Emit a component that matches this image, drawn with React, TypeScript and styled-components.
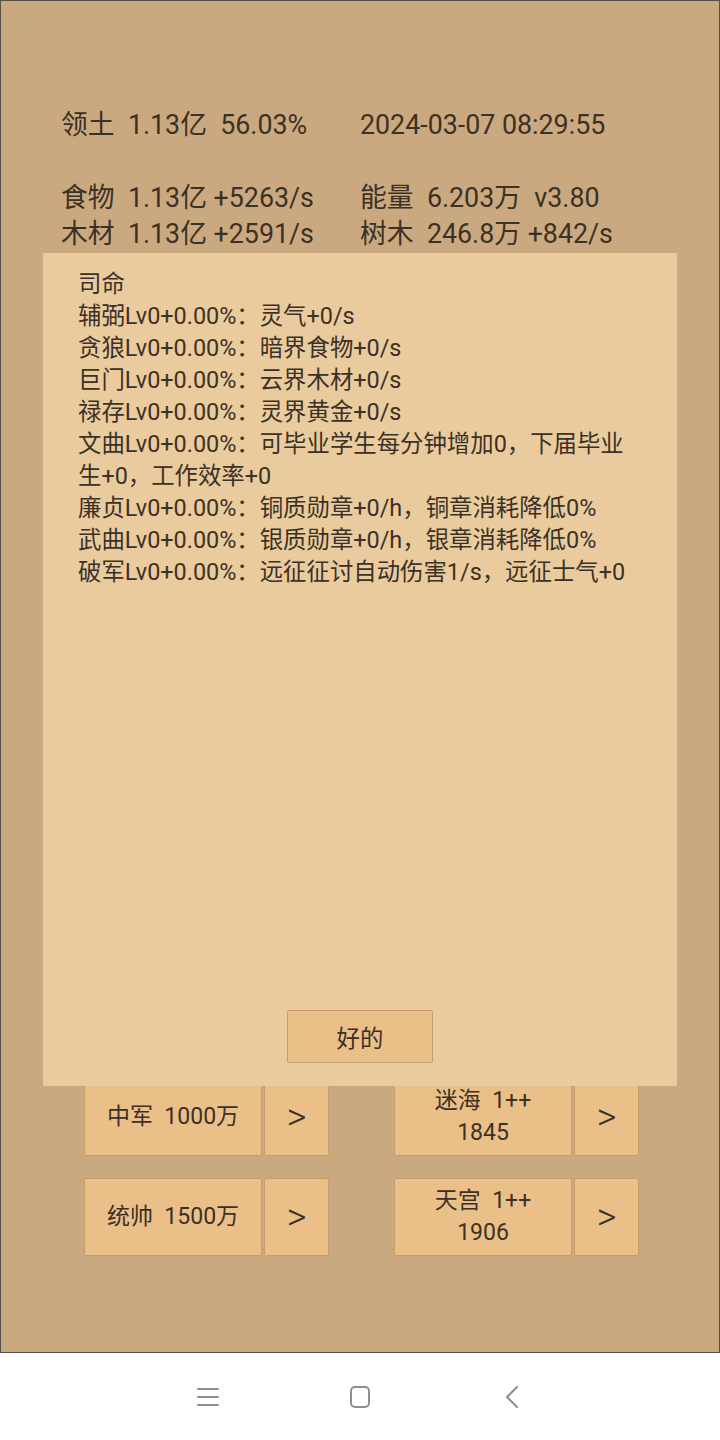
import styled, { createGlobalStyle } from 'styled-components';

const GlobalStyle = createGlobalStyle`
  html, body {
    margin: 0;
    padding: 0;
    background: #ffffff;
  }
  body {
    font-family: Roboto, "Noto Sans CJK SC", sans-serif;
    color: #3a3026;
  }
  * { box-sizing: border-box; }
`;

const Page = styled.div`
  width: 720px;
  height: 1440px;
  display: flex;
  flex-direction: column;
`;

const Screen = styled.div`
  position: relative;
  height: 1353px;
  background: #caa981;
  border: 1px solid #54524f;
  display: flex;
  flex-direction: column;
  padding: 106px 0 96px 0;
`;

const StatGrid = styled.div`
  display: grid;
  grid-template-columns: 299px 1fr;
  padding-left: 60px;
  font-size: 26.8px;
  line-height: 36px;
  color: #3b3125;
  white-space: pre;
`;

const Spacer = styled.div`
  grid-column: 1 / span 2;
  height: 37px;
`;

const ButtonGrid = styled.div`
  margin-top: auto;
  display: grid;
  grid-template-columns: 245px 245px;
  column-gap: 65px;
  row-gap: 22px;
  padding-left: 83px;
`;

const ButtonPair = styled.div`
  display: flex;
  gap: 2px;
  height: 78px;
`;

const GameButton = styled.div<{ $width: number; $big?: boolean }>`
  width: ${({ $width }) => $width}px;
  height: 100%;
  background: #ebc088;
  border: 1px solid #c79c68;
  border-radius: 2px;
  display: flex;
  flex-direction: column;
  align-items: center;
  justify-content: center;
  text-align: center;
  font-size: ${({ $big }) => ($big ? '38px' : '23px')};
  font-weight: ${({ $big }) => ($big ? 300 : 400)};
  line-height: 32px;
  color: #3b3127;
  white-space: pre;
`;

const Dialog = styled.div`
  position: absolute;
  left: 42px;
  top: 252px;
  width: 634px;
  height: 833px;
  background: #eacb9d;
  display: flex;
  flex-direction: column;
  padding: 15px 35px 23px 35px;
`;

const DialogText = styled.div`
  font-size: 23.4px;
  line-height: 32px;
  color: #3b3127;
`;

const OkButton = styled.div`
  margin: auto auto 0 auto;
  width: 146px;
  height: 53px;
  background: #ebc088;
  border: 1px solid #c79c68;
  border-radius: 2px;
  display: flex;
  align-items: center;
  justify-content: center;
  font-size: 23.4px;
  color: #3b3127;
`;

const NavBar = styled.div`
  flex: 1;
  background: #ffffff;
  display: flex;
  align-items: center;
  justify-content: center;
  gap: 128px;
`;

const NavIcon = styled.svg`
  width: 24px;
  height: 24px;
  stroke: #8d8d8d;
  fill: none;
  stroke-width: 2;
  stroke-linecap: round;
  stroke-linejoin: round;
`;

const stats = [
  ['领土  1.13亿  56.03%', '2024-03-07 08:29:55'],
  null,
  ['食物  1.13亿 +5263/s', '能量  6.203万  v3.80'],
  ['木材  1.13亿 +2591/s', '树木  246.8万 +842/s'],
];

const lines = [
  '司命',
  '辅弼Lv0+0.00%：灵气+0/s',
  '贪狼Lv0+0.00%：暗界食物+0/s',
  '巨门Lv0+0.00%：云界木材+0/s',
  '禄存Lv0+0.00%：灵界黄金+0/s',
  '文曲Lv0+0.00%：可毕业学生每分钟增加0，下届毕业生+0，工作效率+0',
  '廉贞Lv0+0.00%：铜质勋章+0/h，铜章消耗降低0%',
  '武曲Lv0+0.00%：银质勋章+0/h，银章消耗降低0%',
  '破军Lv0+0.00%：远征征讨自动伤害1/s，远征士气+0',
];

const buttons = ['中军  1000万', '迷海  1++\n1845', '统帅  1500万', '天宫  1++\n1906'];

export default function App() {
  return (
    <Page>
      <GlobalStyle />
      <Screen>
        <StatGrid>
          {stats.map((row, i) =>
            row ? (
              <>
                <span key={`a${i}`}>{row[0]}</span>
                <span key={`b${i}`}>{row[1]}</span>
              </>
            ) : (
              <Spacer key={`s${i}`} />
            )
          )}
        </StatGrid>
        <ButtonGrid>
          {buttons.map((label) => (
            <ButtonPair key={label}>
              <GameButton $width={178}>{label}</GameButton>
              <GameButton $width={65} $big>
                {'>'}
              </GameButton>
            </ButtonPair>
          ))}
        </ButtonGrid>
        <Dialog>
          {lines.map((line) => (
            <DialogText key={line}>{line}</DialogText>
          ))}
          <OkButton>好的</OkButton>
        </Dialog>
      </Screen>
      <NavBar>
        <NavIcon viewBox="0 0 24 24">
          <path d="M2 4h20M2 12h20M2 20h20" />
        </NavIcon>
        <NavIcon viewBox="0 0 24 24">
          <rect x="3" y="2" width="18" height="20" rx="4" />
        </NavIcon>
        <NavIcon viewBox="0 0 24 24">
          <path d="M17 2L7 12l10 10" />
        </NavIcon>
      </NavBar>
    </Page>
  );
}
